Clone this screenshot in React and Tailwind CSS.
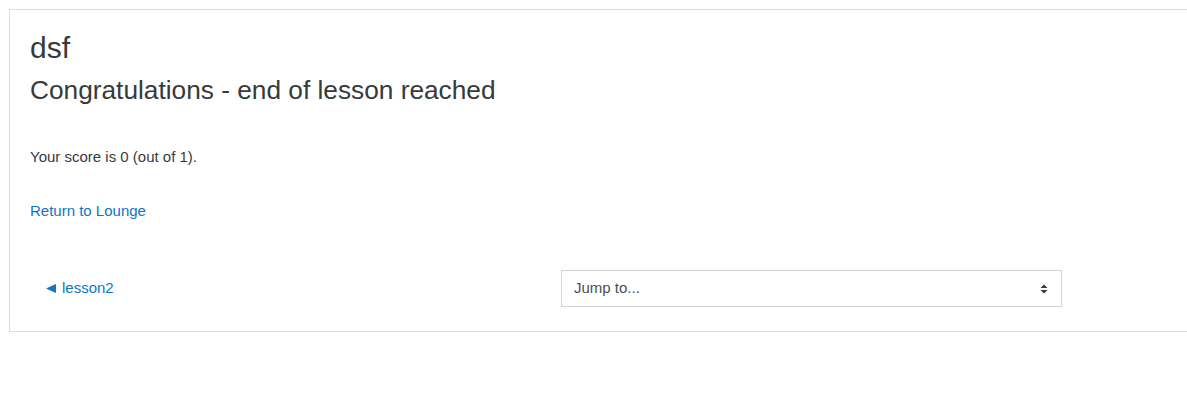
export default function App() {
  return (
    <div className="w-[1187px] h-[400px] overflow-hidden bg-white font-['Liberation_Sans',Arial,sans-serif] text-[#373a3c]">
      <div className="ml-[9px] mt-[9px] w-[1220px] border border-[#dcdcdc] p-[20px] pb-[24px]">
        <h2 className="text-[30px] leading-[36px] mb-[9px]">dsf</h2>
        <h3 className="text-[26.25px] leading-[31.5px]">Congratulations - end of lesson reached</h3>
        <div className="mt-[39px] text-[15px] leading-[22.5px]">
          <p>Your score is 0 (out of 1).</p>
          <p className="mt-[31.5px]">
            <a href="#" className="text-[#0f75c4]">Return to Lounge</a>
          </p>
        </div>
        <div className="mt-[48px] flex items-center">
          <div className="w-[531px] pl-[16px] text-[15px]">
            <a href="#" className="text-[#0f75c4] flex items-center">
              <svg width="10" height="9" viewBox="0 0 10 9" className="mr-[6px]">
                <path d="M0 4.5L10 0V9Z" fill="#0f75c4" />
              </svg>
              lesson2
            </a>
          </div>
          <div className="w-[501px] h-[37px] border border-[#ced4da] flex items-center justify-between pl-[12px] pr-[13px] text-[15px] text-[#495057]">
            <span>Jump to...</span>
            <svg width="8" height="10" viewBox="0 0 8 10">
              <path d="M4 0.5L7.5 4H0.5Z" fill="#343a40" />
              <path d="M4 9.5L7.5 6H0.5Z" fill="#343a40" />
            </svg>
          </div>
        </div>
      </div>
    </div>
  );
}
